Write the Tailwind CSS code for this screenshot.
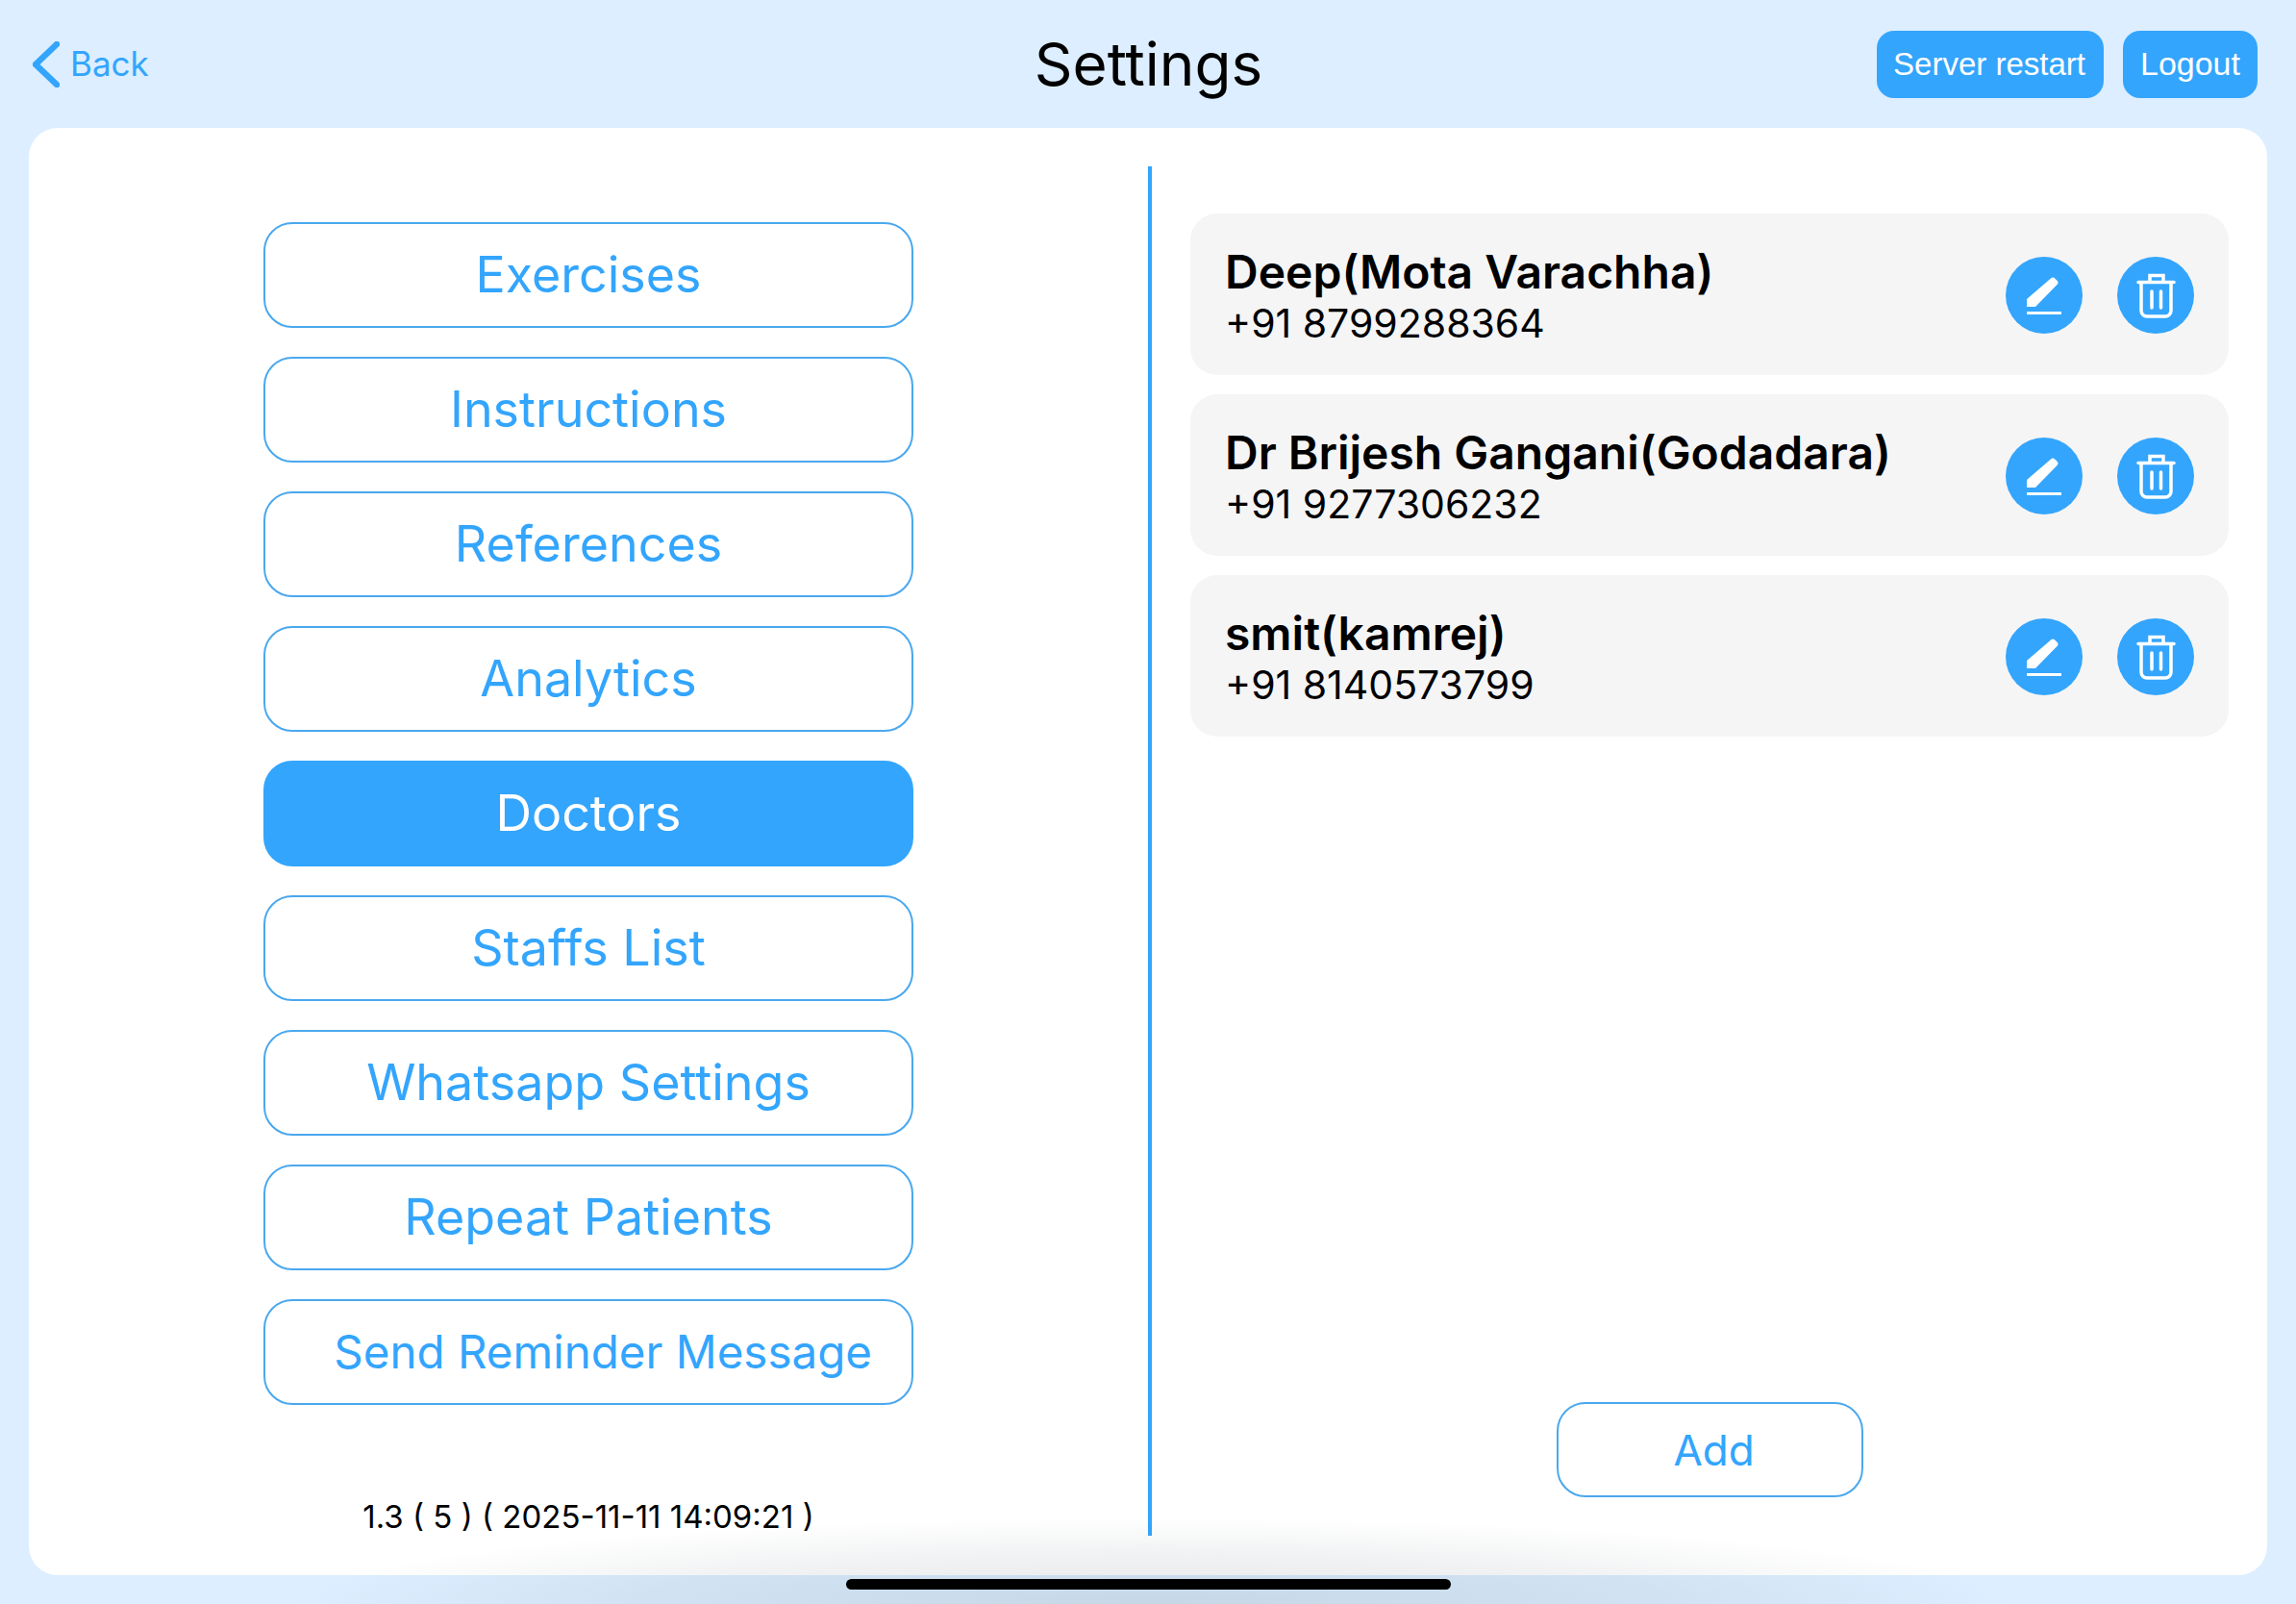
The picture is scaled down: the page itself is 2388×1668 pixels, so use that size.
<!DOCTYPE html>
<html lang="en">
<head>
  <meta charset="UTF-8" />
  <meta name="viewport" content="width=device-width, initial-scale=1.0" />
  <title>Settings</title>
  <script src="https://cdn.jsdelivr.net/npm/@tailwindcss/browser@4"></script>
</head>
<body class="relative h-[1668px] w-[2388px] overflow-hidden bg-[#dceeff] font-['Inter',sans-serif]">

  <!-- Top bar -->
  <header class="grid h-[133px] grid-cols-3 items-center pl-[34px] pr-[40px]">
    <a class="flex items-center gap-[11px] text-[#33a5fd]">
      <svg class="h-[48px] w-[28px]" viewBox="0 0 28 48" fill="none" stroke="currentColor" stroke-width="6.500" stroke-linecap="round" stroke-linejoin="round"><path d="M25 3 3 24l22 21" /></svg>
      <span class="text-[35px] leading-none">Back</span>
    </a>
    <h1 class="pl-[7px] text-center text-[62px] font-normal leading-none text-black">Settings</h1>
    <div class="flex justify-end gap-[20px] font-['Liberation_Sans',sans-serif] text-[33px] text-white">
      <button class="h-[70px] w-[236px] rounded-[18px] bg-[#33a5fd] pr-[2px]">Server restart</button>
      <button class="h-[70px] w-[140px] rounded-[18px] bg-[#33a5fd] text-[34px]">Logout</button>
    </div>
  </header>

  <!-- Main card -->
  <main class="mx-[30px] flex h-[1505px] rounded-[30px] bg-white">

    <!-- Left menu -->
    <section class="flex w-[1164px] flex-col items-center pt-[98px]">
      <nav class="flex flex-col gap-[30px] text-[52px] text-[#33a5fd]">
        <button class="h-[110px] w-[676px] rounded-[30px] border-2 border-[#4aa8ee]">Exercises</button>
        <button class="h-[110px] w-[676px] rounded-[30px] border-2 border-[#4aa8ee]">Instructions</button>
        <button class="h-[110px] w-[676px] rounded-[30px] border-2 border-[#4aa8ee]">References</button>
        <button class="h-[110px] w-[676px] rounded-[30px] border-2 border-[#4aa8ee]">Analytics</button>
        <button class="h-[110px] w-[676px] rounded-[30px] bg-[#33a5fd] text-white">Doctors</button>
        <button class="h-[110px] w-[676px] rounded-[30px] border-2 border-[#4aa8ee]">Staffs List</button>
        <button class="h-[110px] w-[676px] rounded-[30px] border-2 border-[#4aa8ee]">Whatsapp Settings</button>
        <button class="h-[110px] w-[676px] rounded-[30px] border-2 border-[#4aa8ee]">Repeat Patients</button>
        <button class="h-[110px] w-[676px] rounded-[30px] border-2 border-[#4aa8ee] pr-[41px] text-right text-[47.500px]">Send Reminder Message</button>
      </nav>
      <p class="mt-[96px] text-[33px] leading-[40px] text-black">1.3 ( 5 ) ( 2025-11-11 14:09:21 )</p>
    </section>

    <div class="mt-[40px] h-[1424px] w-[4px] bg-[#33a5fd]"></div>

    <!-- Doctors list -->
    <section class="flex flex-1 flex-col pb-[81px] pl-[40px] pt-[89px]">
      <ul class="flex w-[1080px] flex-col gap-[20px]">
        <li class="flex h-[168px] items-center justify-between rounded-[28px] bg-[#f5f5f6] pl-[36px] pr-[36px]">
          <div class="pt-[1px]">
            <div class="text-[48px] font-semibold leading-[56px] text-black">Deep(Mota Varachha)</div>
            <div class="mt-[2px] text-[41px] leading-[46px] text-black">+91 8799288364</div>
          </div>
          <div class="flex gap-[36px] pt-[1px]">
            <button class="h-[80px] w-[80px] rounded-full bg-[#33a5fd]">
              <svg viewBox="0 0 80 80" fill="#fff"><path d="M47 22.500a3 3 0 0 1 4.200 0l2.300 2.300a3 3 0 0 1 0 4.200L31 52H22V44Z" /><rect x="22" y="57" width="36" height="3" /></svg>
            </button>
            <button class="h-[80px] w-[80px] rounded-full bg-[#33a5fd]">
              <svg viewBox="0 0 80 80" fill="none" stroke="#fff" stroke-width="3.500"><path d="M34 25v-5.500h14V25M22 26.500h37" stroke-linecap="round" /><path d="M25 27v29a6 6 0 0 0 6 6h19a6 6 0 0 0 6-6V27" /><path d="M36 36v17M45.500 36v17" stroke-linecap="round" /></svg>
            </button>
          </div>
        </li>
        <li class="flex h-[168px] items-center justify-between rounded-[28px] bg-[#f5f5f6] pl-[36px] pr-[36px]">
          <div class="pt-[1px]">
            <div class="text-[48px] font-semibold leading-[56px] text-black">Dr Brijesh Gangani(Godadara)</div>
            <div class="mt-[2px] text-[41px] leading-[46px] text-black">+91 9277306232</div>
          </div>
          <div class="flex gap-[36px] pt-[1px]">
            <button class="h-[80px] w-[80px] rounded-full bg-[#33a5fd]">
              <svg viewBox="0 0 80 80" fill="#fff"><path d="M47 22.500a3 3 0 0 1 4.200 0l2.300 2.300a3 3 0 0 1 0 4.200L31 52H22V44Z" /><rect x="22" y="57" width="36" height="3" /></svg>
            </button>
            <button class="h-[80px] w-[80px] rounded-full bg-[#33a5fd]">
              <svg viewBox="0 0 80 80" fill="none" stroke="#fff" stroke-width="3.500"><path d="M34 25v-5.500h14V25M22 26.500h37" stroke-linecap="round" /><path d="M25 27v29a6 6 0 0 0 6 6h19a6 6 0 0 0 6-6V27" /><path d="M36 36v17M45.500 36v17" stroke-linecap="round" /></svg>
            </button>
          </div>
        </li>
        <li class="flex h-[168px] items-center justify-between rounded-[28px] bg-[#f5f5f6] pl-[36px] pr-[36px]">
          <div class="pt-[1px]">
            <div class="text-[48px] font-semibold leading-[56px] text-black">smit(kamrej)</div>
            <div class="mt-[2px] text-[41px] leading-[46px] text-black">+91 8140573799</div>
          </div>
          <div class="flex gap-[36px] pt-[1px]">
            <button class="h-[80px] w-[80px] rounded-full bg-[#33a5fd]">
              <svg viewBox="0 0 80 80" fill="#fff"><path d="M47 22.500a3 3 0 0 1 4.200 0l2.300 2.300a3 3 0 0 1 0 4.200L31 52H22V44Z" /><rect x="22" y="57" width="36" height="3" /></svg>
            </button>
            <button class="h-[80px] w-[80px] rounded-full bg-[#33a5fd]">
              <svg viewBox="0 0 80 80" fill="none" stroke="#fff" stroke-width="3.500"><path d="M34 25v-5.500h14V25M22 26.500h37" stroke-linecap="round" /><path d="M25 27v29a6 6 0 0 0 6 6h19a6 6 0 0 0 6-6V27" /><path d="M36 36v17M45.500 36v17" stroke-linecap="round" /></svg>
            </button>
          </div>
        </li>
      </ul>
      <button class="ml-[381px] mt-auto h-[99px] w-[319px] rounded-[30px] border-2 border-[#4aa8ee] pl-[8px] text-[44px] text-[#33a5fd]">Add</button>
    </section>
  </main>

  <!-- Home indicator with its soft shadow -->
  <div class="pointer-events-none absolute bottom-0 left-[300px] h-[90px] w-[1800px] bg-[radial-gradient(closest-side,rgba(60,80,90,0.14),rgba(60,80,90,0.07)_60%,transparent)] [background-size:100%_200%] [background-position:top] bg-no-repeat"></div>
  <div class="absolute bottom-[15px] left-[880px] h-[11px] w-[629px] rounded-full bg-black"></div>
</body>
</html>
